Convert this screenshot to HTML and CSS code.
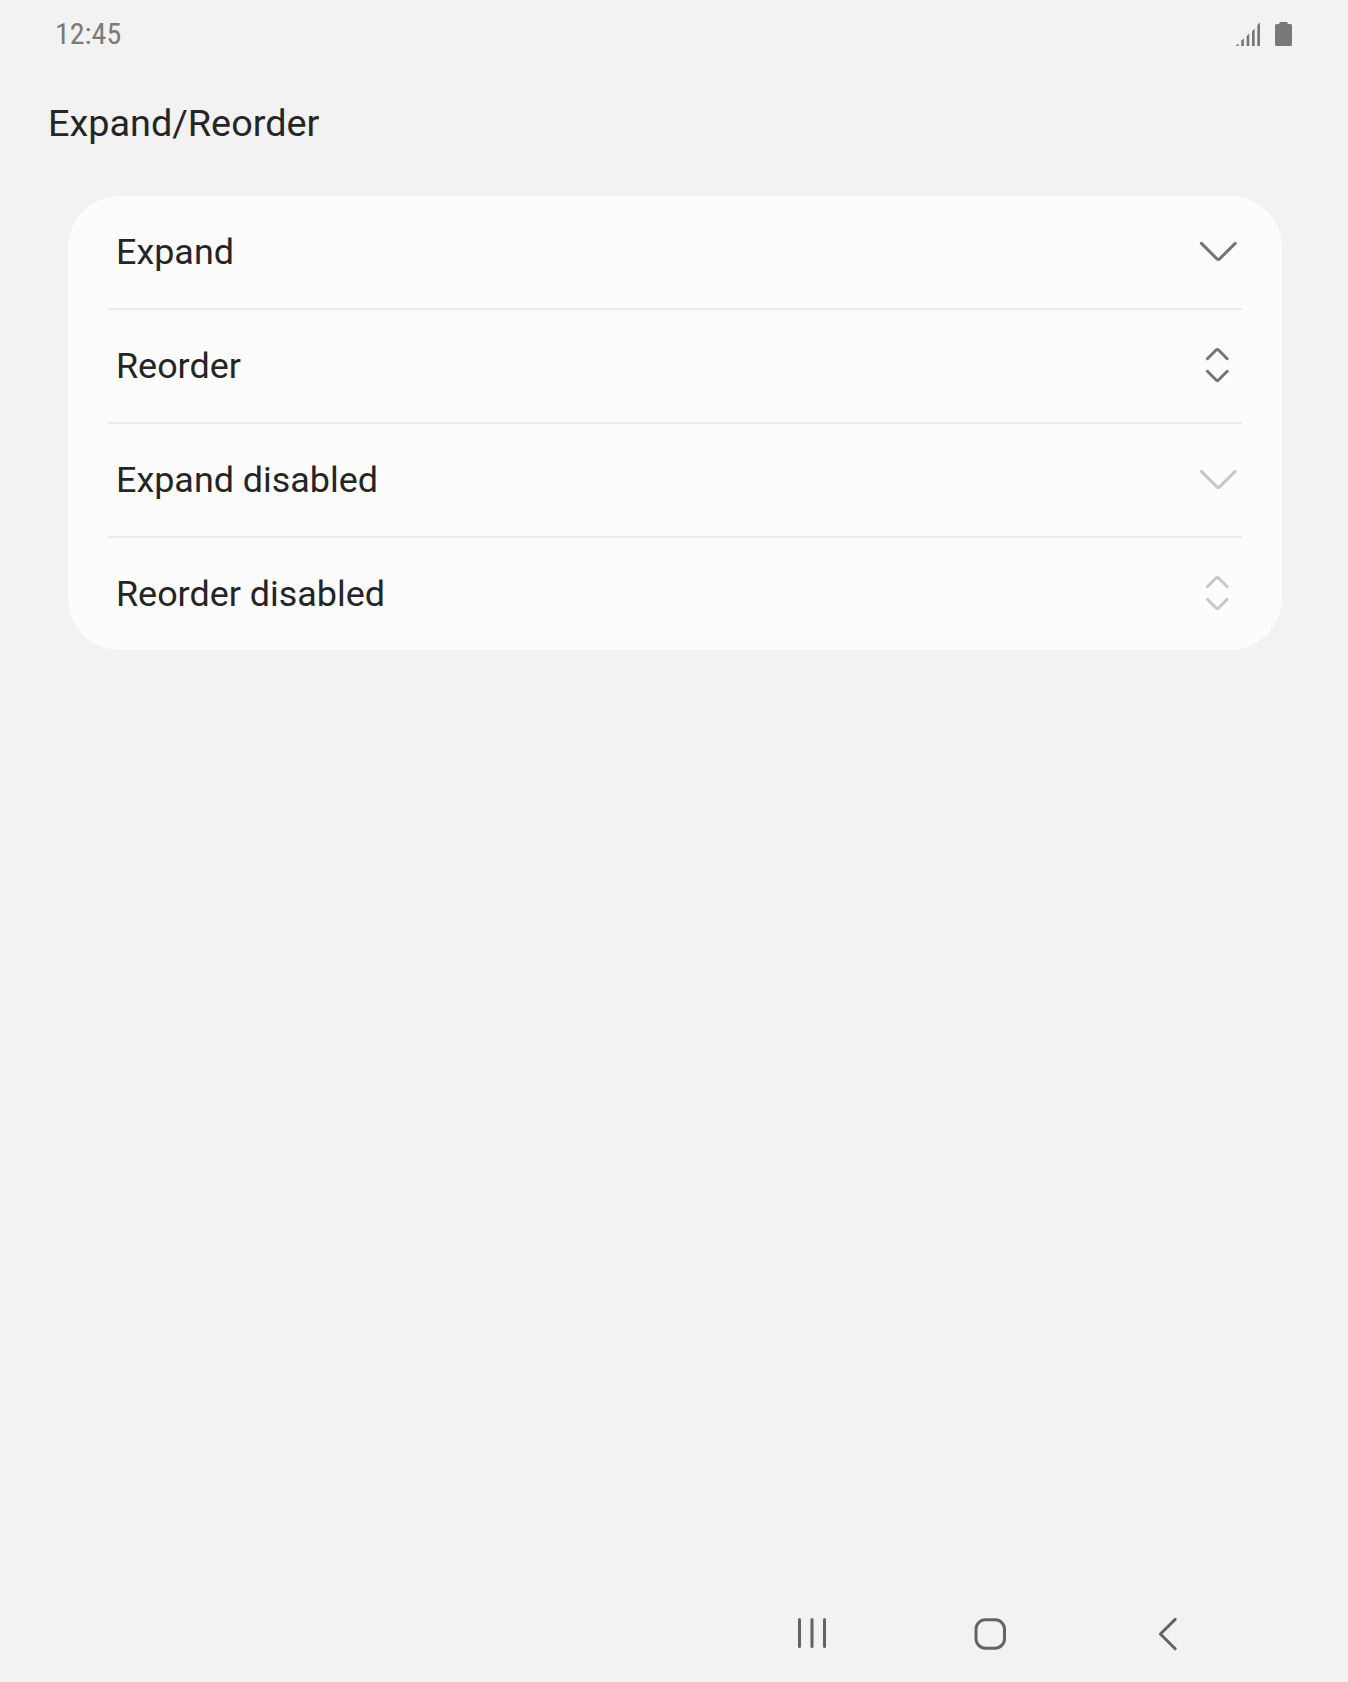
FILE: index.html
```html
<!DOCTYPE html>
<html lang="en">
<head>
<meta charset="utf-8">
<title>Expand/Reorder</title>
<link rel="stylesheet" href="styles.css">
</head>
<body>
<div class="screen">
  <div class="status">
    <span class="clock">12:45</span>
    <div class="status-icons">
      <svg class="signal" width="24" height="24" viewBox="0 0 24 24"><path d="M0 24v-.4L2.600 21.800V24zM5.200 24v-5.600L7.900 16.500V24zM10.600 24V14.200L13.300 11.600V24zM16 24V9.200L18.700 6.400V24zM21.300 24V3.200L24 .3V24z"/></svg>
      <svg class="battery" width="17" height="24" viewBox="0 0 17 24"><path d="M5.500 0h6a1.200 1.200 0 0 1 1.200 1.200V2h2.800a1.500 1.500 0 0 1 1.500 1.500v19a1.500 1.500 0 0 1-1.500 1.500h-14A1.500 1.500 0 0 1 0 22.500v-19A1.500 1.500 0 0 1 1.500 2h2.800v-.8A1.200 1.200 0 0 1 5.500 0z"/></svg>
    </div>
  </div>
  <h1 class="title">Expand/Reorder</h1>
  <ul class="card">
    <li class="row"><span>Expand</span>
      <svg class="icon" viewBox="0 0 40 40"><path d="M3.400 11.400 19 26.900Q20.300 28.200 21.600 26.900L37.200 11.400"/></svg></li>
    <li class="row"><span>Reorder</span>
      <svg class="icon" viewBox="0 0 40 40"><path d="M9.400 12.700 18.100 4Q19.300 2.800 20.500 4L29.200 12.700M9.400 25.300 18.100 34Q19.300 35.200 20.500 34L29.200 25.300"/></svg></li>
    <li class="row"><span>Expand disabled</span>
      <svg class="icon disabled" viewBox="0 0 40 40"><path d="M3.400 11.400 19 26.900Q20.300 28.200 21.600 26.900L37.200 11.400"/></svg></li>
    <li class="row"><span>Reorder disabled</span>
      <svg class="icon disabled" viewBox="0 0 40 40"><path d="M9.400 12.700 18.100 4Q19.300 2.800 20.500 4L29.200 12.700M9.400 25.300 18.100 34Q19.300 35.200 20.500 34L29.200 25.300"/></svg></li>
  </ul>
  <div class="nav">
    <svg width="40" height="40" viewBox="0 0 40 40"><path d="M7.500 5.500v27M20 5.500v27M32.500 5.500v27"/></svg>
    <svg width="40" height="40" viewBox="0 0 40 40"><rect x="6" y="5.700" width="28.500" height="28.500" rx="9.500"/></svg>
    <svg width="40" height="40" viewBox="0 0 40 40"><path d="M27.200 5.400 12.400 20 27.200 34.800"/></svg>
  </div>
</div>
</body>
</html>
```
FILE: styles.css
```css
* { box-sizing: border-box; }

body {
  margin: 0;
  background: #f2f2f2;
  color: #252525;
  font-family: Roboto, "Liberation Sans", sans-serif;
}

.screen {
  display: flex;
  flex-direction: column;
  height: 1682px;
}

.status {
  display: flex;
  align-items: center;
  justify-content: space-between;
  height: 68px;
  padding: 0 56px 0 55px;
}

.clock {
  color: #7a7a7a;
  font-size: 30px;
  font-stretch: 75%;
  line-height: 36px;
}

.status-icons {
  display: flex;
  gap: 15px;
  fill: #787878;
}

.title {
  height: 128px;
  margin: 0;
  padding-left: 48px;
  font-size: 37.8px;
  font-weight: 400;
  line-height: 110px;
}

.card {
  margin: 0 66px 0 68px;
  padding: 0 40px;
  border-radius: 52px;
  background: #fcfcfc;
  list-style: none;
}

.row {
  display: flex;
  align-items: center;
  justify-content: space-between;
  height: 112px;
  padding: 0 4px 0 8px;
  font-size: 35.900px;
}

.row:not(:last-child) {
  height: 114px;
  border-bottom: 2px solid #ebebeb;
}

.icon {
  width: 40px;
  height: 40px;
  fill: none;
  stroke: #757575;
  stroke-width: 3;
  stroke-linecap: round;
  stroke-linejoin: round;
}

.disabled { stroke: #c8c8c8; }

.nav {
  display: flex;
  gap: 138px;
  margin-top: auto;
  padding: 0 0 28px 792px;
  fill: none;
  stroke: #636363;
  stroke-width: 3;
  stroke-linecap: round;
  stroke-linejoin: round;
}
```
